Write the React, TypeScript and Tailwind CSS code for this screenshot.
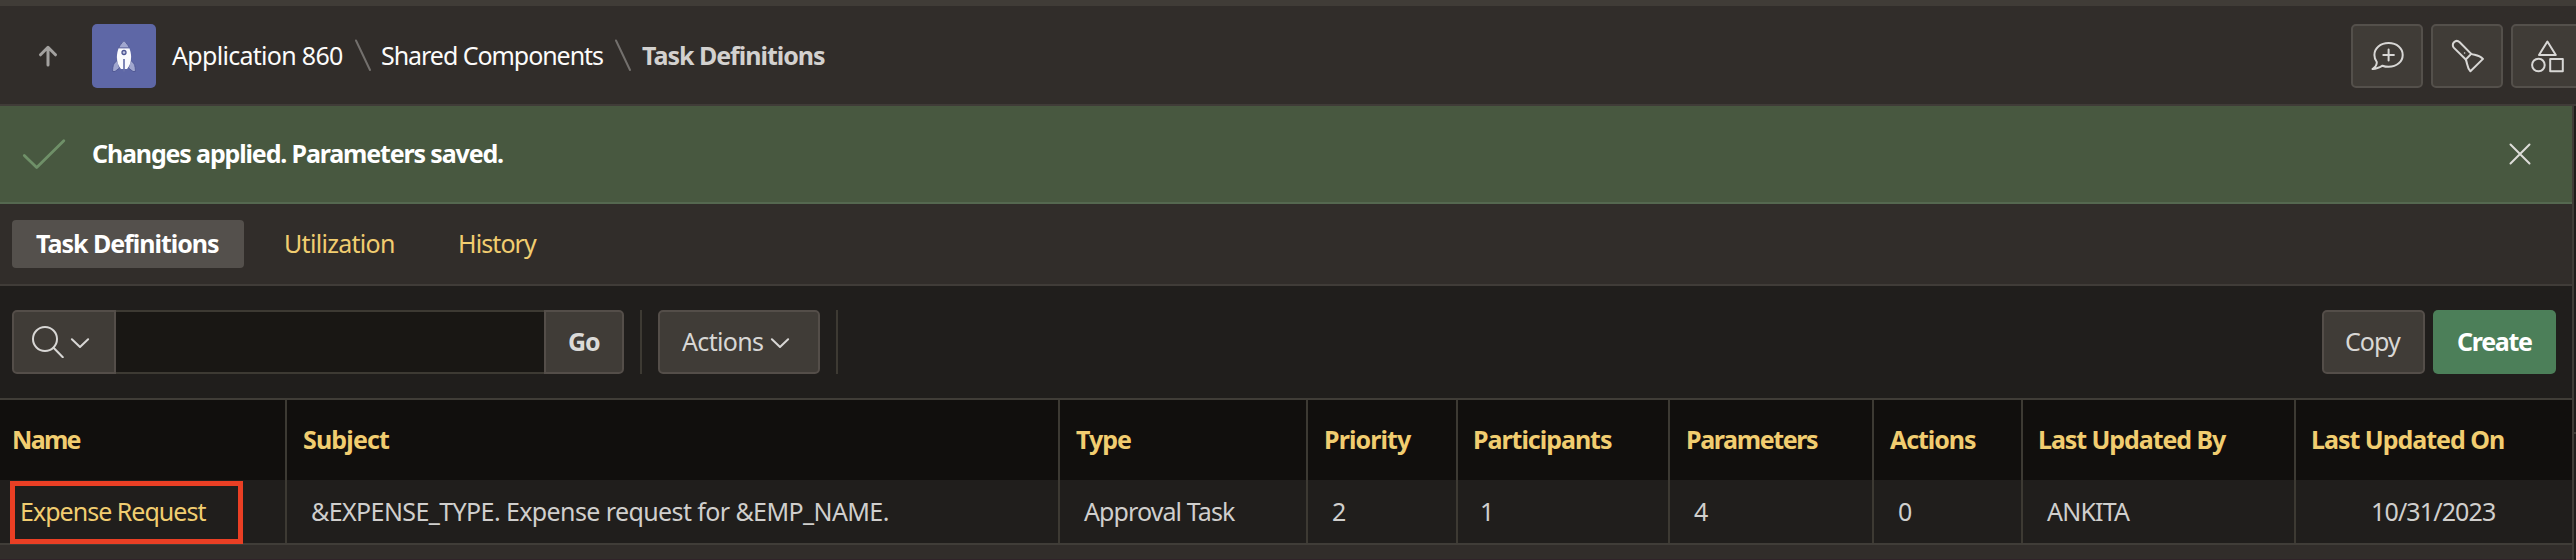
import type { ReactNode } from "react";

const stroke = {
  fill: "none",
  stroke: "currentColor",
  strokeLinecap: "round",
  strokeLinejoin: "round",
} as const;

function UpArrow() {
  return (
    <svg className="h-6 w-6" viewBox="0 0 24 24" {...stroke} strokeWidth="3">
      <path d="M12 21V3.500M4.500 10.800 12 3.300l7.500 7.500" />
    </svg>
  );
}

function Rocket() {
  return (
    <svg className="h-8 w-6 overflow-visible" viewBox="0 0 24 32">
      <path d="M5.500 20.500C2 22.500.6 25 .6 31.500L3 31.500 7.500 28z" fill="#a0a6ce" stroke="#4d5592" strokeWidth=".9" />
      <path d="M18.500 20.500C22 22.500 23.400 25 23.400 31.500L21 31.500 16.500 28z" fill="#a0a6ce" stroke="#4d5592" strokeWidth=".9" />
      <path d="M12 .8C8 4.500 4.900 10 4.900 17c0 5 1.300 9 4.100 12h6c2.800-3 4.100-7 4.100-12C19.100 10 16 4.500 12 .8z" fill="#fafafd" />
      <path d="M12 .8C9.800 2.800 7.900 5.200 6.600 7.900h10.800C16.100 5.200 14.200 2.800 12 .8z" fill="#a0a6ce" stroke="#4d5592" strokeWidth=".9" />
      <circle cx="12" cy="12.500" r="2" fill="#c3c7e2" stroke="#4d5592" strokeWidth="1.300" />
      <path d="M12 19v12.500" stroke="#6a72aa" strokeWidth="1.700" />
    </svg>
  );
}

function Slash() {
  return (
    <svg className="h-8 w-4" viewBox="0 0 16 32" {...stroke} strokeWidth="2">
      <path d="M1 1.500 15 31" />
    </svg>
  );
}

function ChatPlus() {
  return (
    <svg className="h-8 w-8 overflow-visible" viewBox="0 0 32 32" {...stroke} strokeWidth="2">
      <path d="M5.800 22C4.200 20 3.400 17.600 3.400 14.900 3.400 8.200 9.300 3 17.600 3s14.100 5.200 14.100 11.900-5.800 11.900-14.100 11.900c-2.300 0-4.300-.4-6.100-1.100C8.600 27.500 5.500 29.200 1.500 29c2.500-1.500 4.400-4 4.300-7z" />
      <path d="M12.300 15h10.600M17.600 9.500v11" />
    </svg>
  );
}

function Flashlight() {
  return (
    <svg className="h-8 w-8 overflow-visible" viewBox="0 0 32 32" {...stroke} strokeWidth="2">
      <path d="M20.200 13.900 8.700 2.300C7 .7 4.600.7 3 2.200s-1.600 4 0 5.700L14.800 19.500z" />
      <path d="M20.200 13.900c3.500 1.400 7.800.9 11.800 5L19.400 31.300c-3.600-3.800-2.900-8-4.600-11.800" />
      <circle cx="13.600" cy="13" r=".8" fill="currentColor" stroke="none" />
    </svg>
  );
}

function Shapes() {
  return (
    <svg className="h-8 w-8 overflow-visible" viewBox="0 0 32 32" {...stroke} strokeWidth="2">
      <path d="M16.400 1.500 24.800 15H8z" />
      <circle cx="7.400" cy="25" r="6.300" />
      <path d="M19.200 19h12.600v12.300H19.200z" />
    </svg>
  );
}

function Chevron() {
  return (
    <svg className="h-3 w-5 shrink-0" viewBox="0 0 20 12" {...stroke} strokeWidth="2">
      <path d="M1.900 3.200 10 11l8.100-7.800" />
    </svg>
  );
}

function HeaderButton({ children }: { children: ReactNode }) {
  return (
    <button className="flex h-16 w-18 shrink-0 items-center justify-center rounded-[5px] border-2 border-[#54504b] bg-[#403c37] text-[#d8d7d5]">
      {children}
    </button>
  );
}

const columns = [
  { head: "Name", headClass: "pl-3 tracking-[-1.7px]", value: "Expense Request", cellClass: "pl-5 tracking-[-0.98px] text-[#f1cd70]" },
  { head: "Subject", headClass: "border-l-2 pl-4 tracking-[-0.85px]", value: "&EXPENSE_TYPE. Expense request for &EMP_NAME.", cellClass: "border-l-2 pl-6 tracking-[-0.6px]" },
  { head: "Type", headClass: "border-l-2 pl-4 tracking-[-1px]", value: "Approval Task", cellClass: "border-l-2 pl-6 tracking-[-0.9px]" },
  { head: "Priority", headClass: "border-l-2 pl-4 tracking-[-0.9px]", value: "2", cellClass: "border-l-2 pl-6" },
  { head: "Participants", headClass: "border-l-2 pl-[15px] tracking-[-1.03px]", value: "1", cellClass: "border-l-2 pl-[22px]" },
  { head: "Parameters", headClass: "border-l-2 pl-4 tracking-[-1.38px]", value: "4", cellClass: "border-l-2 pl-6" },
  { head: "Actions", headClass: "border-l-2 pl-4 tracking-[-1.07px]", value: "0", cellClass: "border-l-2 pl-6" },
  { head: "Last Updated By", headClass: "border-l-2 pl-[15px] tracking-[-1.07px]", value: "ANKITA", cellClass: "border-l-2 pl-6 tracking-[-0.8px]" },
  { head: "Last Updated On", headClass: "border-l-2 pl-[15px] tracking-[-1.01px]", value: "10/31/2023", cellClass: "border-l-2 pl-[75px] tracking-[-0.86px]" },
];

export default function App() {
  return (
    <div className="flex h-[560px] w-[2576px] flex-col overflow-hidden whitespace-nowrap bg-[#201e1c] font-['Noto_Sans','Open_Sans',sans-serif] text-[25px] leading-8 text-[#d0cfcd]">
      <header className="flex h-[106px] shrink-0 items-center overflow-hidden border-t-6 border-b-2 border-t-[#403c37] border-b-[#403c38] bg-[#312d2a] pt-0.5">
        <div className="flex w-[92px] shrink-0 items-center pl-9 text-[#a3a19f]">
          <UpArrow />
        </div>
        <div className="flex h-16 w-16 shrink-0 items-center justify-center rounded-[5px] bg-[#5e67a6]">
          <Rocket />
        </div>
        <nav className="flex flex-1 items-center pb-0.5 pl-4 text-[#fcfbfa]">
          <span className="w-[183px] tracking-[-0.7px]">Application 860</span>
          <span className="w-[26px] text-[#73706d]"><Slash /></span>
          <span className="w-[234px] tracking-[-1.05px]">Shared Components</span>
          <span className="w-[27px] text-[#73706d]"><Slash /></span>
          <span className="font-bold tracking-[-1.01px] text-[#d3d1cf]">Task Definitions</span>
        </nav>
        <div className="flex w-[225px] shrink-0 gap-2">
          <HeaderButton><ChatPlus /></HeaderButton>
          <HeaderButton><Flashlight /></HeaderButton>
          <HeaderButton><Shapes /></HeaderButton>
        </div>
      </header>

      <div className="flex flex-1">
        <main className="flex w-[2574px] shrink-0 flex-col border-r-2 border-[#403c37] bg-[#312d2a]">
          <div className="flex h-[98px] shrink-0 items-center justify-between border-b-2 border-[#556850] bg-[#485840] pr-10">
            <div className="flex items-center">
              <svg className="ml-5 h-8 w-12 text-[#6f9068]" viewBox="0 0 48 32" {...stroke} strokeWidth="2.800">
                <path d="M4.300 17.500 16.700 29.500 43.800 2.800" />
              </svg>
              <span className="pb-0.5 pl-6 font-bold tracking-[-1.15px] text-white">Changes applied. Parameters saved.</span>
            </div>
            <svg className="h-6 w-6 text-[#deddd9]" viewBox="0 0 24 24" {...stroke} strokeWidth="2">
              <path d="M2.500 2.500 21.500 21.500M21.500 2.500 2.500 21.500" />
            </svg>
          </div>

          <div className="flex h-[82px] shrink-0 items-center border-b-2 border-[#403c38] pl-3 text-[#f1cd70]">
            <span className="flex h-12 w-[232px] items-center rounded-sm bg-[#54504c] pb-0.5 pl-6 font-bold tracking-[-1.01px] text-white">Task Definitions</span>
            <span className="w-[174px] pb-0.5 pl-10 tracking-[-0.7px]">Utilization</span>
            <span className="pb-0.5 pl-10 tracking-[-0.9px]">History</span>
          </div>

          <div className="flex h-[114px] shrink-0 items-center border-b-2 border-[#403d37] bg-[#201e1c] pr-4 pl-3">
            <button className="flex h-16 w-[104px] items-center gap-1.5 rounded-l-[5px] border-2 border-[#544e49] bg-[#403c37] pl-[18px] text-[#d8d7d5]">
              <svg className="h-8 w-8 shrink-0" viewBox="0 0 32 32" {...stroke} strokeWidth="2">
                <circle cx="13" cy="13" r="12" />
                <path d="m21.800 22 9 9.200" />
              </svg>
              <Chevron />
            </button>
            <div className="h-16 w-[428px] border-y-2 border-[#3d3a33] bg-[#191714]" />
            <button className="flex h-16 w-20 items-center rounded-r-[5px] border-2 border-[#544e49] bg-[#403c37] pb-0.5 pl-[22px] font-bold tracking-[-1px] text-[#dbdad8]">Go</button>
            <div className="mx-4 h-16 w-0.5 bg-[#3d3a33]" />
            <button className="flex h-16 w-[162px] items-center rounded-[5px] border-2 border-[#544e49] bg-[#403c37] pl-[22px] text-[#d8d7d5]">
              <span className="w-[88px] pb-0.5 text-left tracking-[-0.67px]">Actions</span>
              <Chevron />
            </button>
            <div className="mx-4 h-16 w-0.5 bg-[#3d3a33]" />
            <div className="ml-auto flex gap-2">
              <button className="flex h-16 w-[103px] items-center rounded-[5px] border-2 border-[#544e49] bg-[#403c37] pb-0.5 pl-[21px] tracking-[-0.93px] text-[#d8d7d5]">Copy</button>
              <button className="flex h-16 w-[123px] items-center rounded-[5px] bg-[#4c7f59] pb-0.5 pl-6 font-bold tracking-[-1.3px] text-white">Create</button>
            </div>
          </div>

          <div className="relative grid shrink-0 grid-cols-[285px_773px_248px_150px_212px_204px_149px_273px_278px] grid-rows-[80px_63px] border-b-2 border-[#403d38]">
            {columns.map((c) => (
              <div key={c.head} className={`flex items-center border-[#3d3a33] bg-[#110f0d] pb-0.5 font-bold text-[#f1cd70] ${c.headClass}`}>{c.head}</div>
            ))}
            {columns.map((c) => (
              <div key={c.head} className={`flex items-center border-[#3d3a33] bg-[#201e1c] pb-0.5 ${c.cellClass}`}>{c.value}</div>
            ))}
            <div className="absolute top-[81px] left-2.5 h-[63px] w-[233px] border-5 border-[#ea3f24]" />
          </div>
          <div className="h-3.5 shrink-0" />
          <div className="h-px shrink-0 bg-[#302329]" />
        </main>
        <aside className="flex flex-1 flex-col">
          <div className="h-[328px] border-b-2 border-[#403c37] bg-[#1f1d1b]" />
        </aside>
      </div>
    </div>
  );
}
